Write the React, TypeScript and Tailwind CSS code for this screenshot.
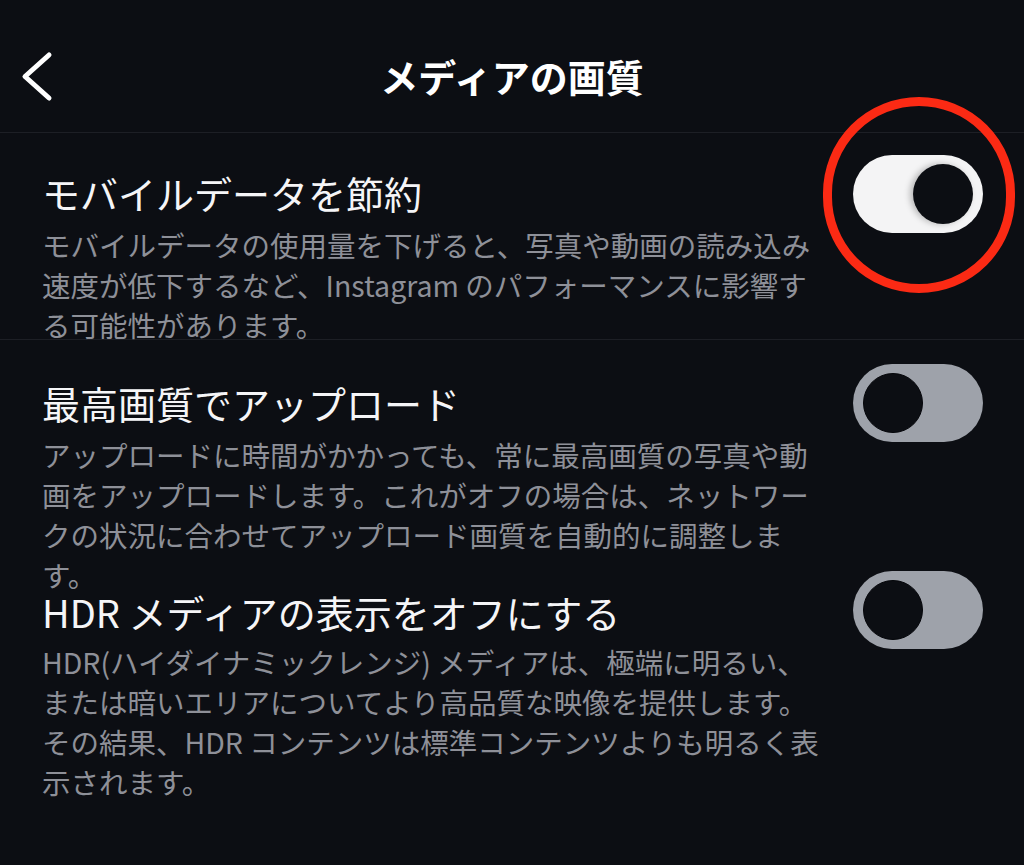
import React from "react";

const FONT = "font-['Noto_Sans_CJK_JP','Noto_Sans',sans-serif]";

function Toggle({ on }: { on: boolean }) {
  if (on) {
    return (
      <div className="flex h-[78px] w-[130px] shrink-0 items-center justify-end rounded-full bg-[#f4f4f5] pr-[10px]">
        <div className="h-[60px] w-[60px] rounded-full bg-[#0c0e13] shadow-[-3px_0_6px_rgba(0,0,0,0.25)]" />
      </div>
    );
  }
  return (
    <div className="flex h-[78px] w-[130px] shrink-0 items-center justify-start rounded-full bg-[#9ea2aa] pl-[10px]">
      <div className="h-[60px] w-[60px] rounded-full border border-[#05060a] bg-[#0c0e13]" />
    </div>
  );
}

function Lines({ lines }: { lines: string[] }) {
  return (
    <div className="text-[28.5px] leading-[40px] text-[#8e9098]">
      {lines.map((l, i) => (
        <div key={i} className="whitespace-nowrap">
          {l}
        </div>
      ))}
    </div>
  );
}

export default function App() {
  return (
    <div className={`relative h-[865px] w-[1024px] overflow-hidden bg-[#0c0e13] ${FONT}`}>
      {/* Header */}
      <div className="relative flex h-[133px] items-center justify-center border-b border-[#1d1f25] pt-[20px]">
        <svg
          className="absolute left-[18px] top-[50px]"
          width="40"
          height="54"
          viewBox="0 0 40 54"
          fill="none"
        >
          <path
            d="M31 5 L7 26.5 L31 48"
            stroke="#ffffff"
            strokeWidth="5"
            strokeLinecap="round"
            strokeLinejoin="round"
          />
        </svg>
        <div className="text-[38px] font-semibold leading-[44px] text-white">メディアの画質</div>
      </div>

      {/* Section 1 */}
      <div className="flex items-start border-b border-[#1d1f25] pl-[42px] pr-[41px]">
        <div className="flex-1 pt-[38px] -mb-[6px]">
          <div className="text-[38px] leading-[44px] text-[#f5f5f7]">モバイルデータを節約</div>
          <div className="mt-[10px]">
            <Lines
              lines={[
                "モバイルデータの使用量を下げると、写真や動画の読み込み",
                "速度が低下するなど、Instagram のパフォーマンスに影響す",
                "る可能性があります。",
              ]}
            />
          </div>
        </div>
        <div className="mt-[22px]">
          <Toggle on />
        </div>
      </div>

      {/* Section 2 */}
      <div className="flex items-start pl-[42px] pr-[41px]">
        <div className="flex-1 pt-[41px]">
          <div className="text-[38px] leading-[44px] text-[#f5f5f7]">最高画質でアップロード</div>
          <div className="mt-[10px]">
            <Lines
              lines={[
                "アップロードに時間がかかっても、常に最高画質の写真や動",
                "画をアップロードします。これがオフの場合は、ネットワー",
                "クの状況に合わせてアップロード画質を自動的に調整しま",
                "す。",
              ]}
            />
          </div>
        </div>
        <div className="mt-[24px]">
          <Toggle on={false} />
        </div>
      </div>

      {/* Section 3 */}
      <div className="-mt-[24px] flex items-start pl-[42px] pr-[41px]">
        <div className="flex-1 pt-[19px]">
          <div className="text-[38px] leading-[44px] text-[#f5f5f7]">HDR メディアの表示をオフにする</div>
          <div className="mt-[8px]">
            <Lines
              lines={[
                "HDR(ハイダイナミックレンジ) メディアは、極端に明るい、",
                "または暗いエリアについてより高品質な映像を提供します。",
                "その結果、HDR コンテンツは標準コンテンツよりも明るく表",
                "示されます。",
              ]}
            />
          </div>
        </div>
        <div>
          <Toggle on={false} />
        </div>
      </div>

      {/* Red annotation circle */}
      <div className="pointer-events-none absolute left-[823px] top-[97px] h-[196px] w-[192px] rounded-full border-[9px] border-[#fb2a14]" />
    </div>
  );
}
